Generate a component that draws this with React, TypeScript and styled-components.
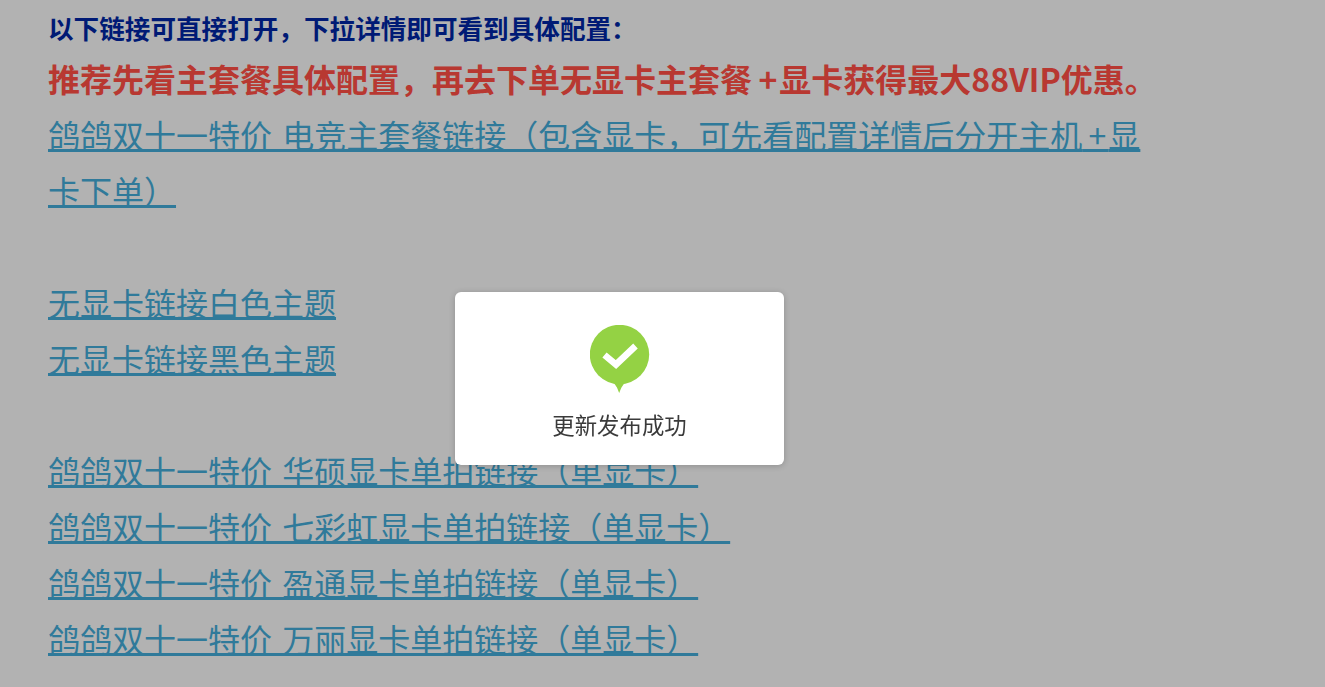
import styled, { createGlobalStyle } from "styled-components";

const FONT = `"Noto Sans CJK SC", "Noto Sans", sans-serif`;
const PLUS = "\u2009+\u200A";

const TOP_LINKS = ["无显卡链接白色主题", "无显卡链接黑色主题"];
const CARD_LINKS = [
    "鸽鸽双十一特价 华硕显卡单拍链接（单显卡）",
    "鸽鸽双十一特价 七彩虹显卡单拍链接（单显卡）",
    "鸽鸽双十一特价 盈通显卡单拍链接（单显卡）",
    "鸽鸽双十一特价 万丽显卡单拍链接（单显卡）",
];

const GlobalStyle = createGlobalStyle`
    html, body {
        margin: 0;
        height: 100%;
        overflow: hidden;
        background: #b2b2b2;
        font-family: ${FONT};
    }
`;

const Article = styled.main`
    width: 1110px;
    padding: 6px 0 0 48px;
`;

const Intro = styled.p`
    margin: 0;
    font-size: 25.6px;
    line-height: 44px;
    font-weight: 700;
    color: #001a75;
`;

const Notice = styled.p`
    margin: 0;
    font-size: 32px;
    line-height: 56px;
    font-weight: 700;
    color: #b83831;
`;

const LinkLine = styled.p`
    margin: 0;
    font-size: 32px;
    line-height: 56px;
    min-height: 56px;
`;

const Anchor = styled.a`
    color: #307a9a;
    text-decoration: underline;
    text-decoration-thickness: 3px;
    text-underline-offset: 1px;
    text-decoration-skip-ink: none;
    white-space: pre-wrap;
    word-spacing: 3px;
`;

const Layer = styled.div`
    position: fixed;
    inset: 0;
    display: flex;
    align-items: center;
    justify-content: center;
`;

const Toast = styled.div`
    width: 329px;
    height: 173px;
    box-sizing: border-box;
    padding-top: 33px;
    margin: 70px 0 0 -86px;
    display: flex;
    flex-direction: column;
    align-items: center;
    background: #fff;
    border-radius: 6px;
    box-shadow: 0 1px 6px rgba(0, 0, 0, 0.2);
`;

const ToastText = styled.div`
    margin-top: 14px;
    font-size: 22.4px;
    line-height: 32px;
    color: #3a3a3a;
`;

const SuccessIcon = () => (
    <svg width="60" height="69" viewBox="0 0 60 69">
        <circle cx="29.5" cy="29.5" r="29.7" fill="#94d244" />
        <path d="M21 56 C25.5 59 27 62 29.2 68 C31.5 62 33 59 37.5 56 Z" fill="#94d244" />
        <path d="M14.5 30 L26 39.5 L45.5 21" fill="none" stroke="#fff" strokeWidth="6.6" />
    </svg>
);

export default function App() {
    return (
        <>
            <GlobalStyle />
            <Article>
                <Intro>以下链接可直接打开，下拉详情即可看到具体配置：</Intro>
                <Notice>推荐先看主套餐具体配置，再去下单无显卡主套餐{PLUS}显卡获得最大88VIP优惠。</Notice>
                <LinkLine>
                    <Anchor href="#">鸽鸽双十一特价 电竞主套餐链接（包含显卡，可先看配置详情后分开主机{PLUS}显卡下单）</Anchor>
                </LinkLine>
                <LinkLine />
                {TOP_LINKS.map(text => (
                    <LinkLine key={text}><Anchor href="#">{text}</Anchor></LinkLine>
                ))}
                <LinkLine />
                {CARD_LINKS.map(text => (
                    <LinkLine key={text}><Anchor href="#">{text}</Anchor></LinkLine>
                ))}
            </Article>
            <Layer>
                <Toast>
                    <SuccessIcon />
                    <ToastText>更新发布成功</ToastText>
                </Toast>
            </Layer>
        </>
    );
}
